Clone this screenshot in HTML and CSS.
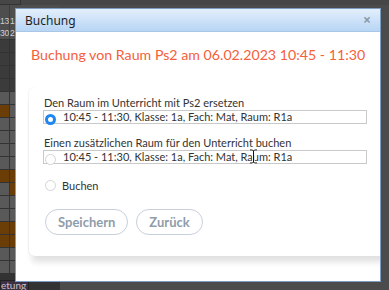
FILE: index.html
```html
<!DOCTYPE html>
<html lang="de">
<head>
<meta charset="utf-8">
<link rel="stylesheet" href="styles.css">
</head>
<body>
<div class="page">
  <div class="topstrip"><div class="topbox"></div></div>
  <div class="cal">
    <div class="cal-head">
      <div class="hc">13<br>30</div>
      <div class="hc">1<br>2</div>
    </div>
    <div class="row dark"><i></i><i></i></div>
    <div class="row dark"><i></i><i></i></div>
    <div class="row dark"><i></i><i></i></div>
    <div class="row dark"><i></i><i></i></div>
    <div class="row"><i></i><i></i></div>
    <div class="row"><i class="br"></i><i></i></div>
    <div class="row"><i></i><i></i></div>
    <div class="row"><i></i><i></i></div>
    <div class="row"><i></i><i></i></div>
    <div class="row"><i></i><i></i></div>
    <div class="row"><i class="br"></i><i class="br"></i></div>
    <div class="row"><i></i><i class="br"></i></div>
    <div class="row"><i></i><i></i></div>
    <div class="row"><i></i><i></i></div>
    <div class="row"><i class="br"></i><i class="br"></i></div>
    <div class="row"><i class="br"></i><i class="br"></i></div>
    <div class="row"><i></i><i></i></div>
    <div class="row"><i></i><i></i></div>
    <div class="foot">etung</div>
  </div>

  <div class="dialog">
    <div class="dlg-title">
      <span>Buchung</span>
      <span class="close">×</span>
    </div>
    <div class="dlg-body">
      <h1 class="heading">Buchung von Raum Ps2 am 06.02.2023 10:45 - 11:30</h1>
      <div class="card">
        <div class="group">
          <div class="label">Den Raum im Unterricht mit Ps2 ersetzen</div>
          <div class="box">
            <span class="radio checked"></span>
            <span class="opt">10:45 - 11:30, Klasse: 1a, Fach: Mat, Raum: R1a</span>
          </div>
        </div>
        <div class="group">
          <div class="label">Einen zusätzlichen Raum für den Unterricht buchen</div>
          <div class="box">
            <span class="radio"></span>
            <span class="opt">10:45 - 11:30, Klasse: 1a, Fach: Mat, Raum: R1a</span>
          </div>
        </div>
        <div class="plain">
          <span class="radio"></span>
          <span class="opt">Buchen</span>
        </div>
        <div class="buttons">
          <button class="btn">Speichern</button>
          <button class="btn">Zurück</button>
        </div>
      </div>
    </div>
    <svg class="cursor" width="9" height="15" viewBox="0 0 9 15">
      <path d="M1 1h2.5l1 1 1-1H8M4.5 2v11M1 14h2.5l1-1 1 1H8" fill="none" stroke="#fff" stroke-width="2.4"/>
      <path d="M1 1h2.5l1 1 1-1H8M4.5 2v11M1 14h2.5l1-1 1 1H8" fill="none" stroke="#111" stroke-width="1"/>
    </svg>
  </div>
</div>
</body>
</html>
```

FILE: styles.css
```css
* { box-sizing: border-box; }
html, body { margin: 0; padding: 0; }
body {
  width: 389px;
  height: 290px;
  overflow: hidden;
  background: #4b4b4b;
  font-family: "Lato", "Open Sans", sans-serif;
}
.page {
  position: relative;
  width: 389px;
  height: 290px;
  overflow: hidden;
}
.topstrip {
  height: 5px;
  background: #464646;
}
.topbox {
  width: 21px;
  height: 5px;
  border-right: 1px solid #333;
  border-bottom: 1px solid #333;
}
.cal {
  width: 60px;
  display: flex;
  flex-direction: column;
  background: #333;
  gap: 1px;
}
.cal-head {
  height: 34px;
  display: grid;
  grid-template-columns: 9px 1fr;
  gap: 1px;
  background: #3e3e3e;
}
.hc {
  background: #4e4e4e;
  color: #cfcfcf;
  font-family: "Liberation Sans", sans-serif;
  font-size: 8.5px;
  line-height: 12px;
  padding-top: 10px;
  letter-spacing: -0.3px;
  white-space: nowrap;
  overflow: hidden;
}
.row {
  height: 12px;
  display: grid;
  grid-template-columns: 9px 1fr;
  gap: 1px;
}
.row i {
  display: block;
  background: #595959;
}
.row.dark i { background: #3b3b3b; }
.row i.br { background: #6a3e06; }
.foot {
  margin-top: 6px;
  width: 29px;
  height: 14px;
  background: #3c3044;
  border: 1px solid #222;
  color: #c8c0cc;
  font-size: 10px;
  line-height: 9px;
  white-space: nowrap;
}

.dialog {
  position: absolute;
  left: 15px;
  top: 8px;
  width: 366px;
  height: 274px;
  background: #fff;
  border: 1px solid #7c9cc2;
  overflow: hidden;
}
.dlg-title {
  height: 23px;
  background: linear-gradient(#e3effc, #b7d5f4);
  border-bottom: 1px solid #a9c6e6;
  display: flex;
  align-items: center;
  justify-content: space-between;
  padding: 0 9px 0 9px;
  font-family: "Noto Sans", sans-serif;
  font-size: 12px;
  color: #1e1e1e;
}
.close {
  color: #8d9aaa;
  font-size: 14px;
  font-weight: bold;
  line-height: 1;
}
.dlg-body {
  padding: 12px 0 0 13px;
}
.heading {
  margin: 0 0 0 2px;
  font-weight: normal;
  font-size: 14.2px;
  line-height: 22px;
  color: #f5603c;
  white-space: nowrap;
}
.card {
  margin-top: 21px;
  width: 420px;
  height: 169px;
  border-radius: 6px;
  background: #fff;
  box-shadow: -1px 0 1px rgba(0,0,0,0.05), 0 9px 6px -3px rgba(0,0,0,0.12);
  padding: 9px 0 0 14px;
  color: #333;
}
.group { margin-bottom: 12px; }
.label {
  font-size: 11px;
  line-height: 13px;
  padding-left: 1px;
  margin-bottom: 1px;
}
.box {
  width: 324px;
  height: 14px;
  border: 1px solid #c9c9c9;
  display: flex;
  align-items: flex-end;
  gap: 7px;
  padding-left: 1px;
}
.opt {
  font-size: 11px;
  line-height: 13px;
  white-space: nowrap;
}
.radio {
  flex: none;
  width: 11px;
  height: 11px;
  border-radius: 50%;
  border: 1px solid #d4d4d4;
  background: #fff;
  margin-bottom: -2px;
}
.radio.checked {
  border: 3px solid #1e86f0;
  background: #fff;
}
.plain {
  display: flex;
  align-items: center;
  gap: 6px;
  padding-left: 2px;
  margin-top: 15px;
}
.plain .radio { margin-bottom: 0; }
.buttons {
  display: flex;
  gap: 8px;
  margin-top: 17px;
  padding-left: 2px;
}
.btn {
  height: 26px;
  border: 1px solid #c7d0da;
  border-radius: 13px;
  background: #fff;
  color: #8f9caa;
  font-family: "Lato", sans-serif;
  font-weight: bold;
  font-size: 13px;
  padding: 0 12px;
}
.cursor {
  position: absolute;
  left: 233px;
  top: 140px;
}
```
